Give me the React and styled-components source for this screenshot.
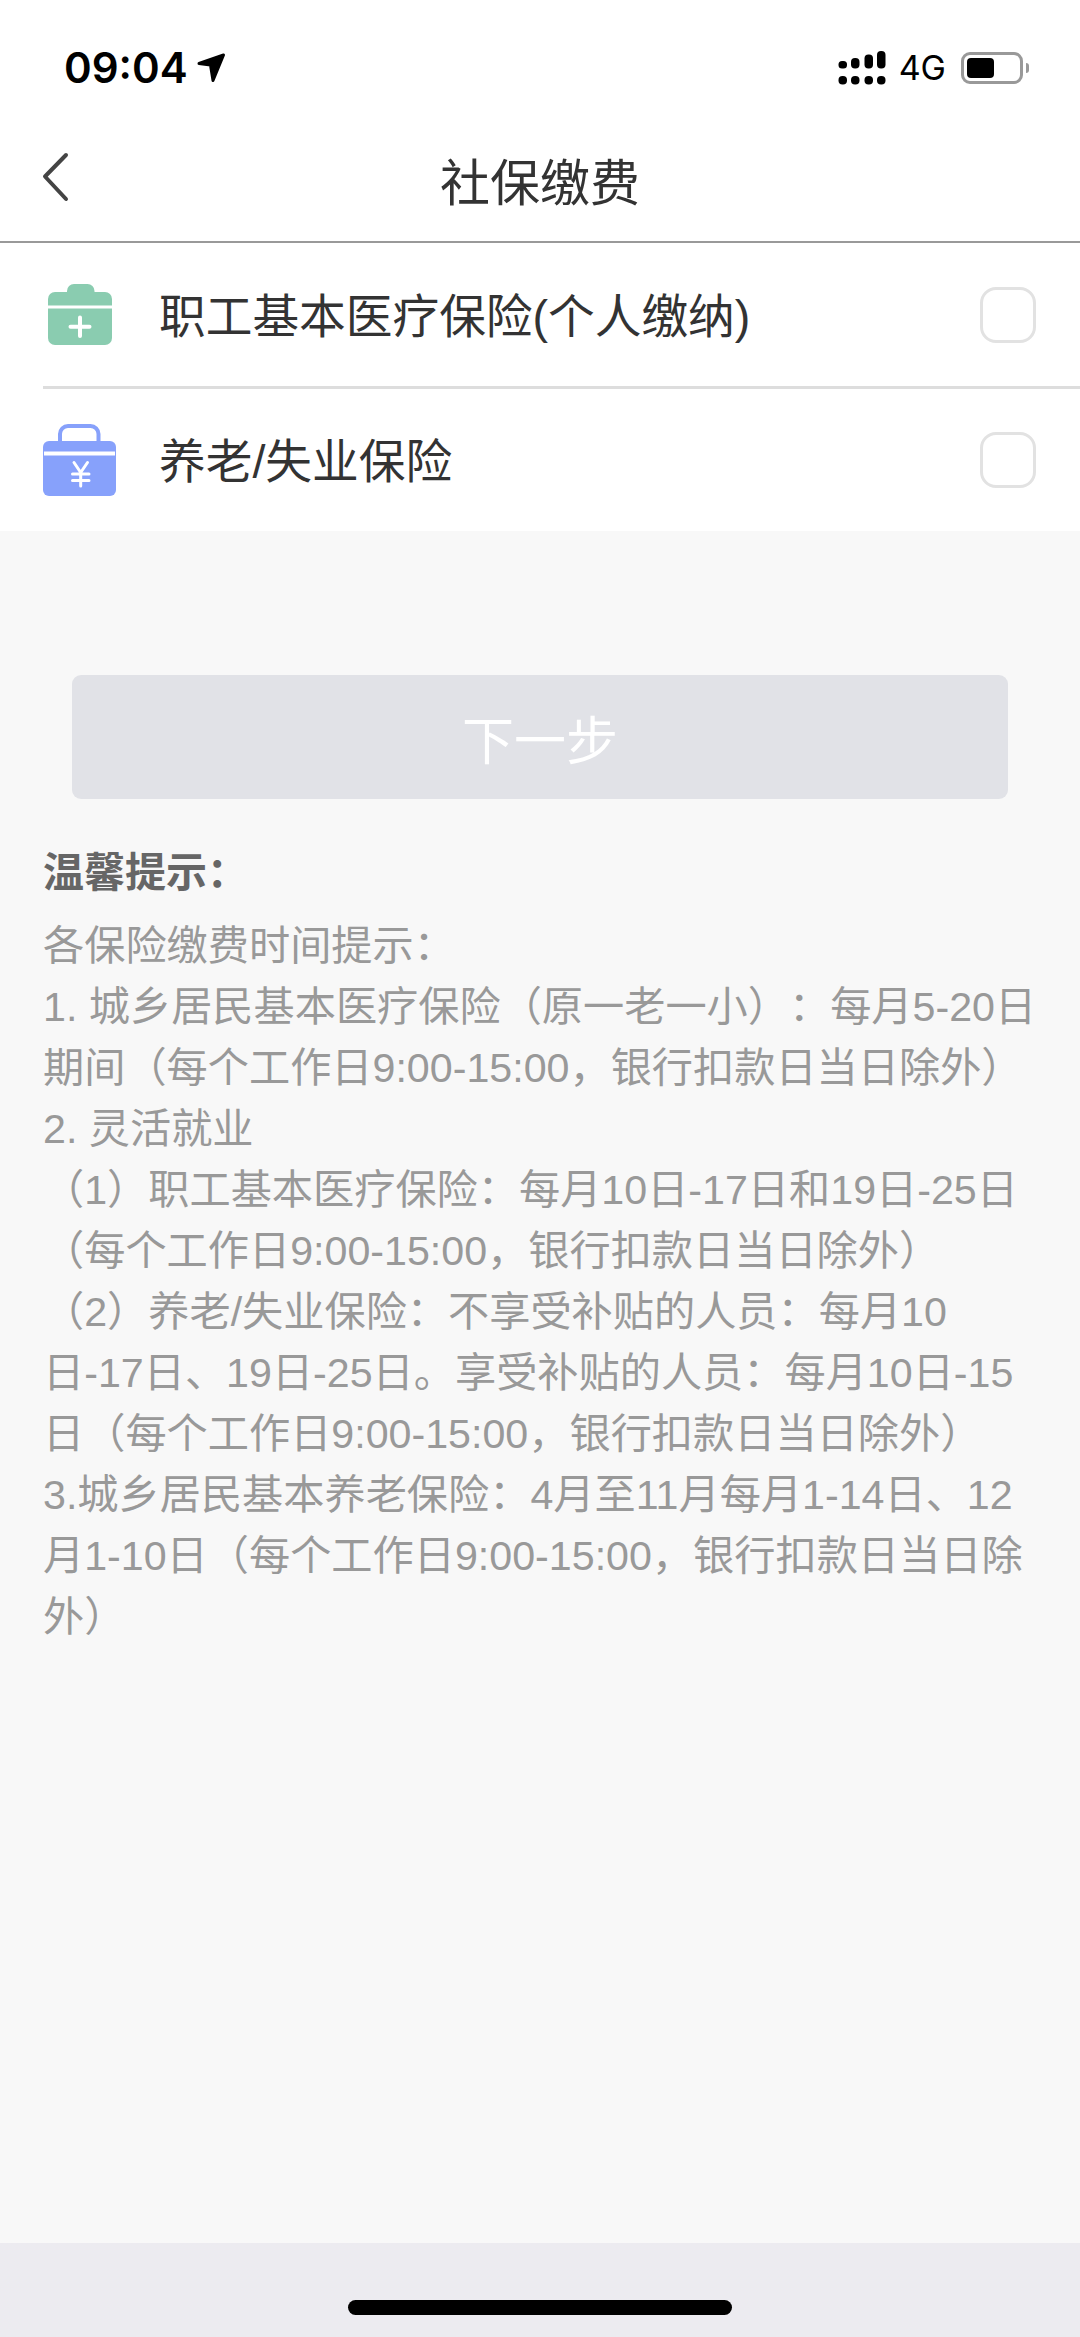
import React from "react";
import styled, { createGlobalStyle } from "styled-components";

const CJK = `"Liberation Sans", "Noto Sans CJK SC", sans-serif`;

const tipLines = [
  "各保险缴费时间提示：",
  "1. 城乡居民基本医疗保险（原一老一小）：每月5-20日",
  "期间（每个工作日9:00-15:00，银行扣款日当日除外）",
  "2. 灵活就业",
  "（1）职工基本医疗保险：每月10日-17日和19日-25日",
  "（每个工作日9:00-15:00，银行扣款日当日除外）",
  "（2）养老/失业保险：不享受补贴的人员：每月10",
  "日-17日、19日-25日。享受补贴的人员：每月10日-15",
  "日（每个工作日9:00-15:00，银行扣款日当日除外）",
  "3.城乡居民基本养老保险：4月至11月每月1-14日、12",
  "月1-10日（每个工作日9:00-15:00，银行扣款日当日除",
  "外）",
];

const App = () => {
  return (
    <Page>
      <GlobalStyle />
      <StatusBar>
        <TimeGroup>
          <Time>09:04</Time>
          <LocationArrow />
        </TimeGroup>
        <StatusRight>
          <Signal />
          <Network>4G</Network>
          <Battery>
            <BatteryLevel />
          </Battery>
          <BatteryNub />
        </StatusRight>
      </StatusBar>
      <NavBar>
        <BackButton>
          <svg width="28" height="50" viewBox="0 0 28 50" fill="none">
            <path d="M25 3 L4 24.5 L25 47" stroke="#444" strokeWidth="4" strokeLinecap="round" strokeLinejoin="round" />
          </svg>
        </BackButton>
        <Title>社保缴费</Title>
      </NavBar>
      <List>
        <Row>
          <IconSlot>
            <MedicalIcon />
          </IconSlot>
          <RowLabel>职工基本医疗保险(个人缴纳)</RowLabel>
          <Checkbox />
        </Row>
        <Row>
          <IconSlot>
            <PensionIcon />
          </IconSlot>
          <RowLabel>养老/失业保险</RowLabel>
          <Checkbox />
        </Row>
      </List>
      <Main>
        <NextButton>下一步</NextButton>
        <Tips>
          <TipsTitle>温馨提示：</TipsTitle>
          {tipLines.map((line, index) => (
            <TipLine key={index}>{line}</TipLine>
          ))}
        </Tips>
      </Main>
      <Footer>
        <HomeBar />
      </Footer>
    </Page>
  );
};

const LocationArrow = () => (
  <svg width="30" height="30" viewBox="0 0 30 30">
    <path d="M2 10.5 L26.5 2 L16 27.5 L13.5 12 Z" fill="#000" stroke="#000" strokeWidth="3" strokeLinejoin="round" />
  </svg>
);

const Signal = () => (
  <svg width="48" height="34" viewBox="0 0 48 34" fill="#000">
    <rect x="0.5" y="25" width="8.5" height="8.5" rx="4" />
    <rect x="13" y="25" width="8.5" height="8.5" rx="4" />
    <rect x="26.5" y="25" width="8.5" height="8.5" rx="4" />
    <rect x="39" y="25" width="8.5" height="8.5" rx="4" />
    <rect x="0.5" y="10" width="8.5" height="7.5" rx="3.5" />
    <rect x="13" y="7" width="8.5" height="10.5" rx="4" />
    <rect x="26.5" y="3.5" width="8.5" height="14" rx="4" />
    <rect x="39" y="0" width="8.5" height="17.5" rx="4" />
  </svg>
);

const MedicalIcon = () => (
  <svg width="64" height="61" viewBox="0 0 64 61">
    <rect x="19" y="0" width="27.5" height="16" rx="7" fill="#8accb0" />
    <rect x="0" y="8" width="64" height="53" rx="7" fill="#8accb0" />
    <rect x="0" y="21.5" width="64" height="3" fill="#fff" />
    <path d="M22.5 42.7 H41.5 M32 33.5 V52" stroke="#fff" strokeWidth="4" strokeLinecap="round" />
  </svg>
);

const PensionIcon = () => (
  <svg width="73" height="72" viewBox="0 0 73 72">
    <rect x="17" y="2" width="38.5" height="24" rx="8" fill="none" stroke="#87a1fb" strokeWidth="4" />
    <rect x="0" y="17" width="73" height="55" rx="6" fill="#87a1fb" />
    <rect x="1" y="27.5" width="71" height="4" fill="#fff" />
    <path
      d="M31 38.5 L37.7 48.5 L44.5 38.5 M29.5 50 H46 M29.5 56.5 H46 M37.7 49 V62"
      fill="none"
      stroke="#fff"
      strokeWidth="3"
      strokeLinecap="round"
      strokeLinejoin="round"
    />
  </svg>
);

export default App;

const GlobalStyle = createGlobalStyle`
  html, body {
    margin: 0;
    padding: 0;
    background: #fff;
  }
  * {
    box-sizing: border-box;
  }
`;

const Page = styled.div`
  display: flex;
  flex-direction: column;
  width: 1080px;
  height: 2337px;
  overflow: hidden;
  font-family: ${CJK};
  text-spacing-trim: space-all;
`;

const StatusBar = styled.div`
  display: flex;
  align-items: center;
  justify-content: space-between;
  height: 136px;
  padding: 0 51px 0 64px;
  background: #fff;
`;

const TimeGroup = styled.div`
  display: flex;
  align-items: center;
  gap: 9px;
`;

const Time = styled.span`
  font-family: Inter, sans-serif;
  font-size: 42px;
  font-weight: 600;
  line-height: 48px;
  color: #000;
`;

const StatusRight = styled.div`
  display: flex;
  align-items: center;
`;

const Network = styled.span`
  margin: 0 15px 0 13px;
  font-family: Inter, sans-serif;
  font-size: 34px;
  font-weight: 400;
  line-height: 40px;
  color: #000;
`;

const Battery = styled.div`
  width: 62px;
  height: 32px;
  padding: 3px;
  border: 3px solid #999;
  border-radius: 9px;
`;

const BatteryLevel = styled.div`
  width: 27px;
  height: 100%;
  background: #000;
  border-radius: 4px;
`;

const BatteryNub = styled.div`
  width: 3px;
  height: 10px;
  margin-left: 3px;
  background: #999;
  border-radius: 0 3px 3px 0;
`;

const NavBar = styled.div`
  position: relative;
  display: flex;
  align-items: center;
  justify-content: center;
  height: 107px;
  padding-bottom: 10px;
  background: #fff;
  border-bottom: 2px solid #999;
`;

const BackButton = styled.div`
  position: absolute;
  left: 41px;
  top: 16px;
  display: flex;
`;

const Title = styled.h1`
  margin: 0;
  font-size: 50px;
  font-weight: 400;
  line-height: 60px;
  color: #333;
`;

const List = styled.div`
  padding-left: 43px;
  background: #fff;
`;

const Row = styled.div`
  display: flex;
  align-items: center;
  height: 143px;
  padding-right: 44px;

  & + & {
    height: 145px;
    border-top: 3px solid #ddd;
  }
`;

const IconSlot = styled.div`
  display: flex;
  align-items: center;
  justify-content: center;
  width: 73px;
  margin-right: 43px;
`;

const RowLabel = styled.span`
  flex: 1;
  padding-top: 4px;
  font-size: 46.7px;
  line-height: 60px;
  color: #333;
`;

const Checkbox = styled.div`
  width: 56px;
  height: 56px;
  border: 3px solid #e2e2e2;
  border-radius: 16px;
  background: #fff;
`;

const Main = styled.div`
  flex: 1;
  padding-top: 144px;
  background: #f8f8f8;
`;

const NextButton = styled.div`
  display: flex;
  align-items: center;
  justify-content: center;
  height: 124px;
  margin: 0 72px;
  border-radius: 9px;
  background: #e1e2e7;
  font-size: 52px;
  color: #fff;
`;

const Tips = styled.div`
  padding: 44px 0 0 43px;
`;

const TipsTitle = styled.div`
  margin-bottom: 12px;
  font-size: 41px;
  font-weight: 700;
  line-height: 61px;
  color: #666;
`;

const TipLine = styled.div`
  font-size: 41.2px;
  line-height: 61px;
  white-space: nowrap;
  color: #999;
`;

const Footer = styled.div`
  display: flex;
  justify-content: center;
  height: 94px;
  padding-top: 57px;
  background: #ecebf0;
`;

const HomeBar = styled.div`
  width: 384px;
  height: 15px;
  border-radius: 8px;
  background: #000;
`;
